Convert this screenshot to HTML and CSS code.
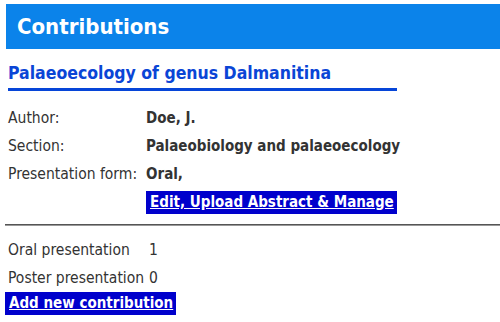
FILE: index.html
```html
<!DOCTYPE html>
<html lang="en">
<head>
    <meta charset="UTF-8">
    <title>Contributions</title>
    <link rel="stylesheet" href="styles.css">
</head>
<body>
    <header class="page-header">
        <h1>Contributions</h1>
    </header>

    <div class="contribution">
        <h2 class="contribution-title">Palaeoecology of genus Dalmanitina</h2>

        <div class="details">
            <div class="label">Author:</div>
            <div class="value">Doe, J.</div>
            <div class="label">Section:</div>
            <div class="value">Palaeobiology and palaeoecology</div>
            <div class="label">Presentation form:</div>
            <div class="value">Oral,</div>
            <div class="label"></div>
            <div class="value"><a href="#" class="action">Edit, Upload Abstract &amp; Manage</a></div>
        </div>
    </div>

    <hr class="divider">

    <div class="summary">
        <span class="summary-label">Oral presentation</span><span class="summary-count">1</span>
        <span class="summary-label">Poster presentation</span><span class="summary-count">0</span>
    </div>
    <a href="#" class="action add-action">Add new contribution</a>
</body>
</html>
```

FILE: styles.css
```css
body {
    font-family: "DejaVu Sans Condensed", "DejaVu Sans", sans-serif;
    font-size: 15.5px;
    color: #333;
    margin: 0;
    padding: 4px 0 0 6px;
    background-color: #fff;
}
.page-header {
    background-color: #0b83ea;
    height: 45px;
    display: flex;
    align-items: center;
    padding-left: 11px;
}
.page-header h1 {
    margin: 0;
    color: #fff;
    font-size: 22px;
    font-weight: bold;
}
.contribution {
    padding-left: 2px;
}
.contribution-title {
    margin: 13px 0 0 0;
    width: 389px;
    font-size: 17.5px;
    line-height: 22px;
    color: #0a45d6;
    border-bottom: 3px solid #0645d8;
    padding-bottom: 4px;
}
.details {
    display: grid;
    grid-template-columns: 138px auto;
    grid-auto-rows: 28px;
    align-items: center;
    margin-top: 13px;
}
.value {
    font-weight: bold;
    font-size: 15px;
}
.action {
    display: inline-block;
    background-color: #0000cc;
    color: #fff;
    font-weight: bold;
    font-size: 15px;
    text-decoration: underline;
    padding: 3px 3px 3px 4px;
    line-height: 17px;
}
.divider {
    border: none;
    border-top: 1px solid #555;
    border-bottom: 1px solid #999;
    margin: 8px 0 0 -1px;
}
.summary {
    display: grid;
    grid-template-columns: auto auto;
    grid-auto-rows: 28px;
    justify-content: start;
    align-items: center;
    column-gap: 5px;
    margin-top: 10px;
    padding-left: 2px;
}
.summary-count {
    text-align: center;
}
.add-action {
    margin-left: -1px;
}
```
